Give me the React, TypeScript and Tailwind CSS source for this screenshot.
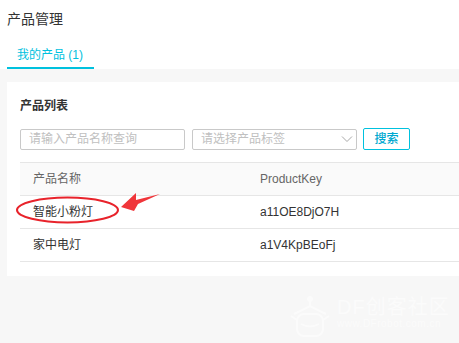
import React from "react";

const font = { fontFamily: '"Liberation Sans", Arial, "Noto Sans CJK SC", sans-serif' };

export default function App() {
  return (
    <div className="relative w-[459px] h-[343px] overflow-hidden bg-[#f7f7f7]" style={font}>
      <div className="h-[69px] bg-white px-[7px] flex flex-col">
        <div className="pt-[9px] text-[14px] leading-[20px] text-[#333]">产品管理</div>
        <div className="mt-[16px] w-[87px] border-b-2 border-[#00c1de] pb-[2px] pl-[10px] text-[12px] leading-[20px] text-[#00c1de]">
          我的产品 (1)
        </div>
      </div>

      <div className="ml-[7px] mt-[13px] bg-white pl-[13px] pt-[14px] pb-[14px]">
        <div className="text-[12px] leading-[20px] font-semibold text-[#333]">产品列表</div>
        <div className="mt-[12px] flex items-center h-[22px]">
          <div className="w-[165px] h-[21px] rounded-[2px] border border-[#c9c9c9] pl-[8px] text-[12px] leading-[19px] text-[#c0c0c0]">
            请输入产品名称查询
          </div>
          <div className="ml-[7px] w-[165px] h-[21px] rounded-[2px] border border-[#c9c9c9] pl-[8px] pr-[2px] flex items-center justify-between text-[12px] text-[#c0c0c0]">
            <span className="leading-[19px]">请选择产品标签</span>
            <svg width="12" height="8" viewBox="0 0 12 8" className="mr-[1px]">
              <path d="M1 1.5 L6 6.5 L11 1.5" fill="none" stroke="#a8a8a8" strokeWidth="1" />
            </svg>
          </div>
          <div className="ml-[6px] w-[47px] h-[22px] rounded-[2px] border border-[#00c1de] flex items-center justify-center text-[12px] text-[#00a8d0] font-medium">
            搜索
          </div>
        </div>

        <div className="mt-[12px] text-[12px]">
          <div className="flex h-[34px] items-center border-t border-b border-[#e6e6e6] bg-[#fafafa] text-[#666]">
            <div className="w-[240px] pl-[13px]">产品名称</div>
            <div className="flex-1">ProductKey</div>
          </div>
          <div className="flex h-[33px] items-center border-b border-[#e6e6e6] text-[#333]">
            <div className="w-[240px] pl-[13px]">智能小粉灯</div>
            <div className="flex-1">a11OE8DjO7H</div>
          </div>
          <div className="flex h-[33px] items-center border-b border-[#e6e6e6] text-[#333]">
            <div className="w-[240px] pl-[13px]">家中电灯</div>
            <div className="flex-1">a1V4KpBEoFj</div>
          </div>
        </div>
      </div>

      {/* red annotation */}
      <svg className="absolute left-0 top-0 pointer-events-none" width="459" height="343" viewBox="0 0 459 343">
        <ellipse cx="67.5" cy="210" rx="50.5" ry="12.5" fill="none" stroke="#e8232b" strokeWidth="2" />
        <polygon
          points="121,207 136,193 136,200 160,194 138,204 134,211"
          fill="#f0353a"
        />
      </svg>

      {/* faint watermark */}
      <div className="absolute left-[288px] top-[296px] flex items-start text-white opacity-50 pointer-events-none">
        <svg width="44" height="46" viewBox="0 0 44 46">
          <g fill="none" stroke="#ffffff" strokeWidth="2">
            <line x1="22" y1="2" x2="22" y2="10" />
            <circle cx="22" cy="3" r="2" fill="#ffffff" />
            <path d="M6 18 L22 10 L38 18" />
            <rect x="9" y="18" width="26" height="22" rx="7" />
            <path d="M13 28 Q22 33 31 28" />
            <line x1="3" y1="20" x2="9" y2="24" />
            <line x1="41" y1="20" x2="35" y2="24" />
          </g>
        </svg>
        <div className="ml-[5px] flex flex-col">
          <div className="text-[20px] leading-[22px] tracking-[1px]">DF创客社区</div>
          <div className="text-[10px] leading-[12px] tracking-[0.5px]">www.DFrobot.com.cn</div>
        </div>
      </div>
    </div>
  );
}
